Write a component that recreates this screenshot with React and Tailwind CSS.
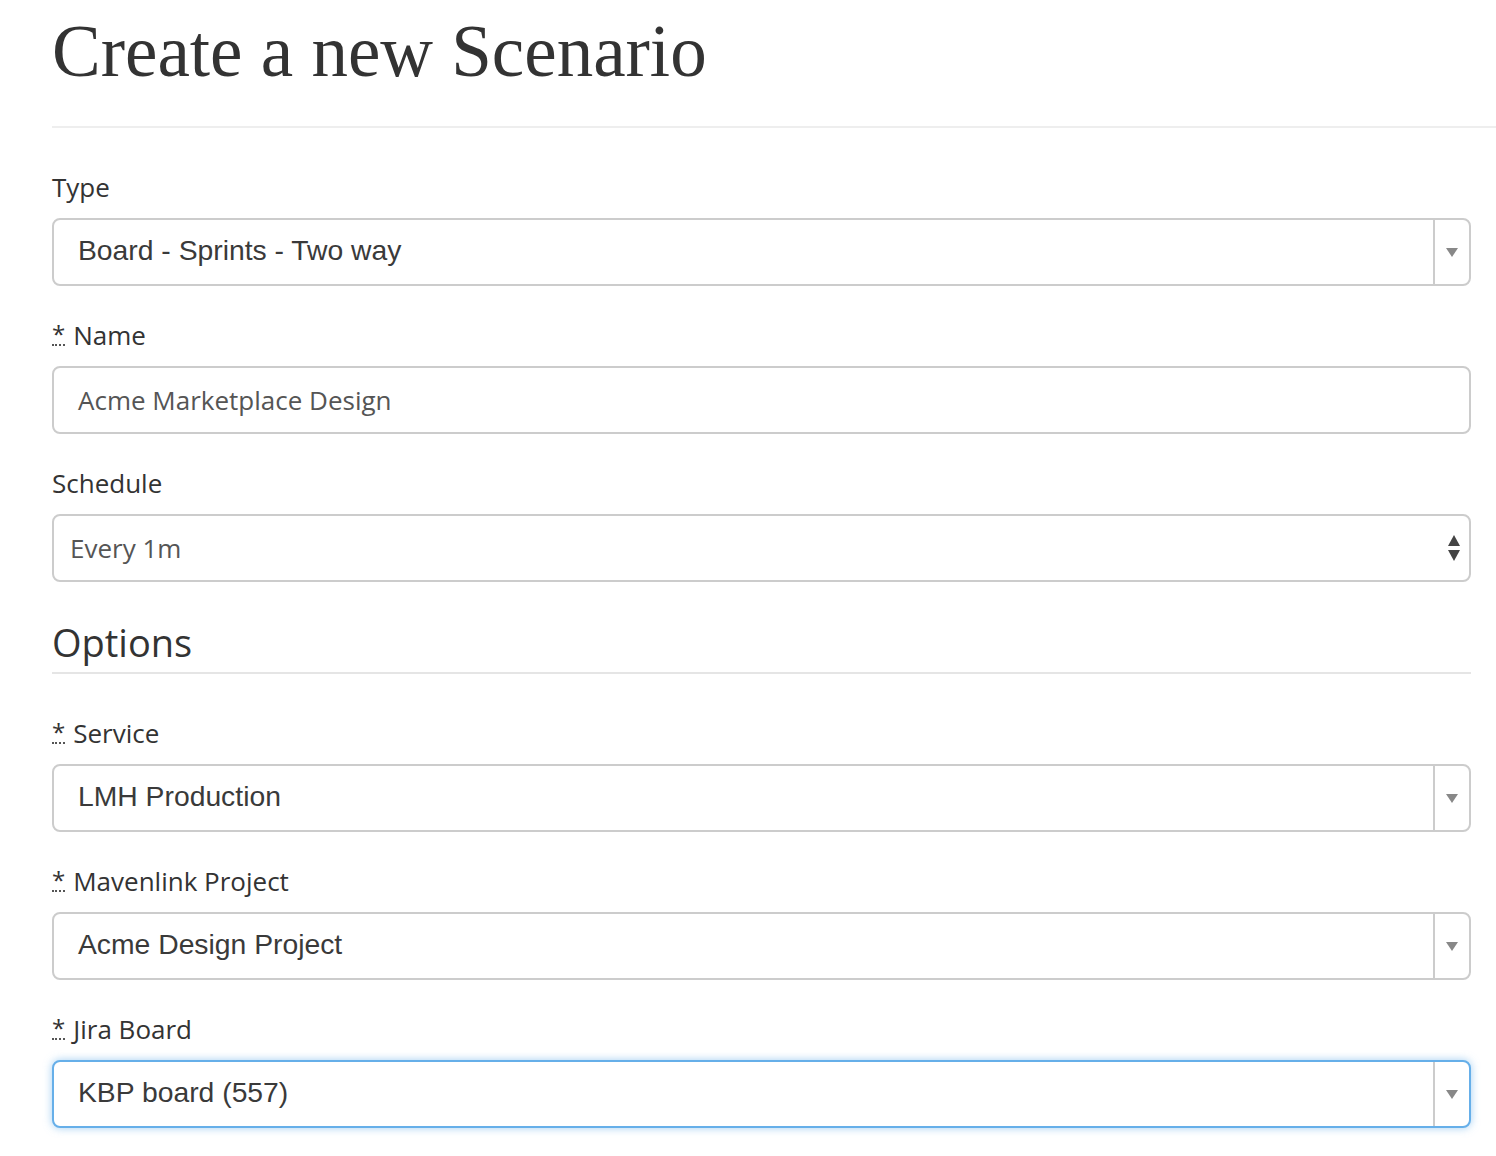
const Arrow = () => (
  <div className="flex w-[36px] items-center justify-center self-stretch border-l-2 border-[#cccccc]">
    <svg width="14" height="10" viewBox="0 0 14 10">
      <path d="M1 1 L13 1 L7 10 Z" fill="#888888" />
    </svg>
  </div>
);

const Label = ({ children, required }) => (
  <label className="mb-[13px] flex items-center gap-[8px] text-[26px] leading-[36px] text-[#333333] font-['Open_Sans',sans-serif]">
    {required && (
      <abbr title="required" className="no-underline border-b-2 border-dotted border-[#555555] leading-[20px] h-[22px] text-[24px]">*</abbr>
    )}
    <span>{children}</span>
  </label>
);

const SelectBox = ({ value, focused }) => (
  <div
    className={
      focused
        ? "flex h-[68px] items-center rounded-[8px] border-2 border-[#66afe9] bg-white shadow-[0_0_8px_rgba(102,175,233,0.6)]"
        : "flex h-[68px] items-center rounded-[8px] border-2 border-[#cccccc] bg-white"
    }
  >
    <div className="flex-1 pl-[24px] pb-[4px] text-[28.3px] text-[#3a3a3a] font-['Liberation_Sans',Arial,sans-serif]">{value}</div>
    <Arrow />
  </div>
);

export default function App() {
  return (
    <div className="min-h-screen bg-white pl-[52px] pb-[30px]">
      <div className="pt-[10px]">
        <h1 className="text-[73px] leading-[84px] text-[#333333] font-['Liberation_Serif',serif]">
          Create a new Scenario
        </h1>
        <hr className="mt-[32px] border-0 border-t-2 border-[#eeeeee]" />
      </div>

      <form className="pr-[25px] pt-[41px]">
        <div className="mb-[31px]">
          <Label>Type</Label>
          <SelectBox value="Board - Sprints - Two way" />
        </div>

        <div className="mb-[31px]">
          <Label required>Name</Label>
          <div className="flex h-[68px] items-center rounded-[8px] border-2 border-[#cccccc] bg-white pl-[24px] text-[26px] text-[#555555] font-['Open_Sans',sans-serif]">
            Acme Marketplace Design
          </div>
        </div>

        <div className="mb-[31px]">
          <Label>Schedule</Label>
          <div className="flex h-[68px] items-center justify-between rounded-[8px] border-2 border-[#cccccc] bg-white pl-[16px] pr-[8px] text-[26px] text-[#555555] font-['Open_Sans',sans-serif]">
            <span>Every 1m</span>
            <svg width="14" height="28" viewBox="0 0 14 28">
              <path d="M7 1 L13 12 L1 12 Z" fill="#444444" />
              <path d="M1 16 L13 16 L7 27 Z" fill="#444444" />
            </svg>
          </div>
        </div>

        <div className="mt-[35px]">
          <h2 className="text-[38px] leading-[50px] text-[#333333] font-['Open_Sans',sans-serif]">Options</h2>
          <hr className="mt-[5px] border-0 border-t-2 border-[#e5e5e5]" />
        </div>

        <div className="mt-[41px] mb-[31px]">
          <Label required>Service</Label>
          <SelectBox value="LMH Production" />
        </div>

        <div className="mb-[31px]">
          <Label required>Mavenlink Project</Label>
          <SelectBox value="Acme Design Project" />
        </div>

        <div>
          <Label required>Jira Board</Label>
          <SelectBox value="KBP board (557)" focused />
        </div>
      </form>
    </div>
  );
}
